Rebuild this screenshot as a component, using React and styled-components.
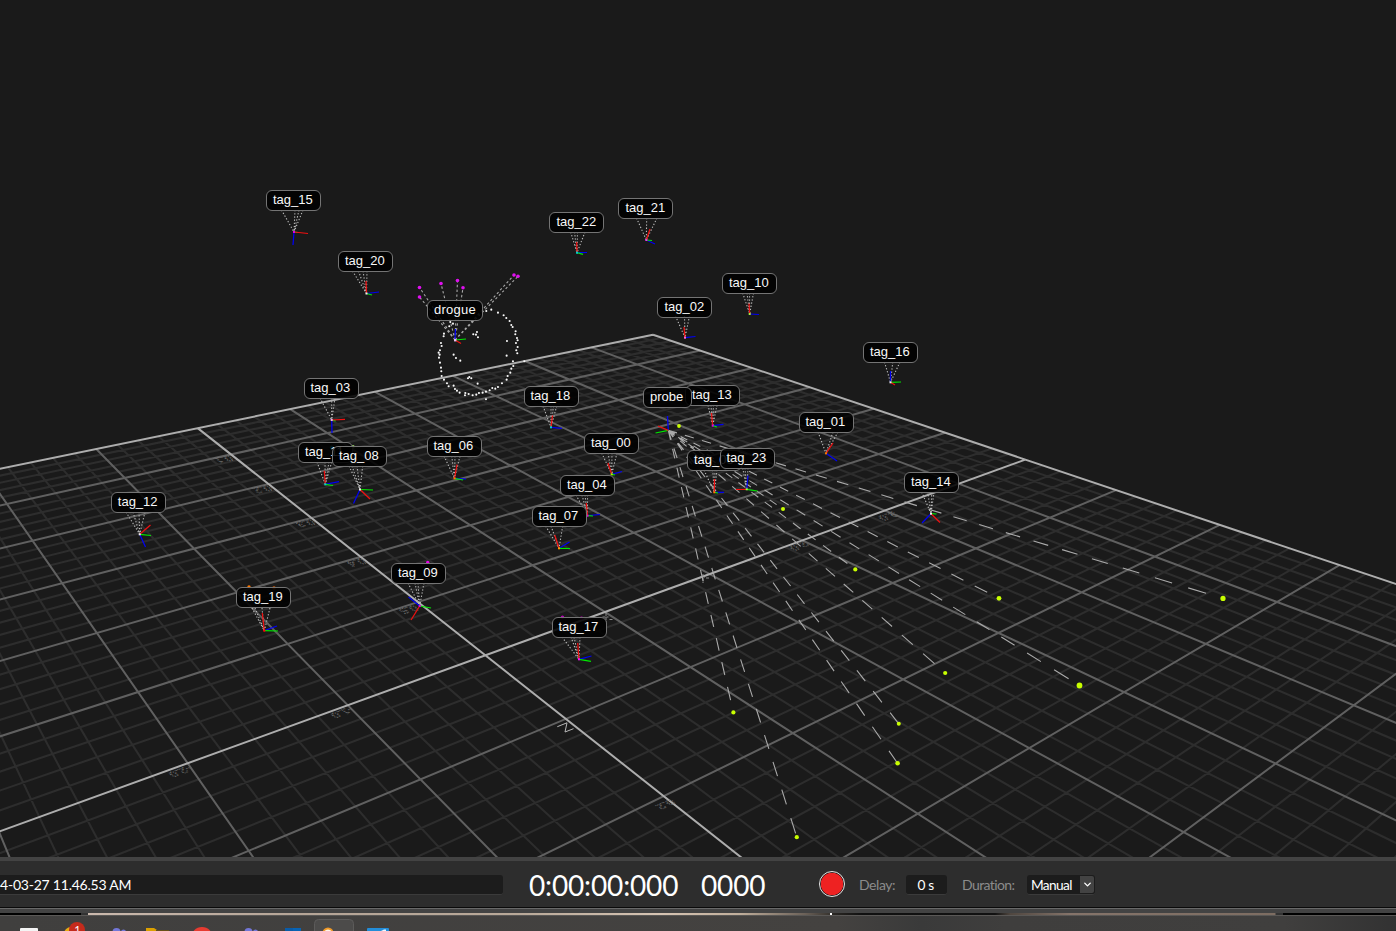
import React from "react";
import styled, { createGlobalStyle } from "styled-components";
import { ChevronDown } from "lucide-react";

const GlobalStyle = createGlobalStyle`
  * { box-sizing: border-box; }
  body { margin: 0; background: #1a1a1a; overflow: hidden; }
`;

const Screen = styled.div`
  display: flex;
  flex-direction: column;
  width: 1396px;
  height: 931px;
  overflow: hidden;
  font-family: Lato, "Liberation Sans", sans-serif;
`;

const Viewport = styled.main`
  position: relative;
  height: 857px;
  flex: none;
  overflow: hidden;
  background: #1a1a1a;
`;

const Scene = styled.svg`
  display: block;
  width: 1396px;
  height: 857px;
`;

const AxisText = styled.text`
  font: 12px "Liberation Sans", sans-serif;
  fill: none;
  stroke: ${(p) => p.$tone};
  stroke-width: 0.7px;
  stroke-dasharray: ${(p) => p.$dash};
`;

const Tag = styled.div`
  position: absolute;
  left: ${(p) => p.$x}px;
  top: ${(p) => p.$y}px;
  width: ${(p) => p.$w}px;
  height: 21px;
  padding-left: 6px;
  border: 1px solid #747474;
  border-radius: 6px;
  background: rgba(0, 0, 0, 0.88);
  color: #f8f8f8;
  font: 13px/18px "Liberation Sans", sans-serif;
  letter-spacing: ${(p) => p.$spacing || 0}px;
  white-space: nowrap;
`;

const ControlBar = styled.footer`
  display: flex;
  align-items: flex-start;
  height: 51px;
  flex: none;
  padding-top: 14px;
  border-top: 4px solid #434343;
  border-bottom: 1px solid #0a0a0a;
  background: #2d2d2d;
  color: #fff;
`;

const NameField = styled.div`
  width: 503px;
  height: 20px;
  border-bottom: 1px solid #3b3b3b;
  border-radius: 0 3px 3px 0;
  background: #1c1c1c;
  font-size: 14px;
  letter-spacing: -0.22px;
  line-height: 20px;
  white-space: nowrap;
`;

const Clock = styled.div`
  width: ${(p) => p.$w}px;
  margin-left: ${(p) => p.$gap}px;
  height: 20px;
  font-size: 28px;
  letter-spacing: -0.15px;
  line-height: 21px;
  white-space: nowrap;
`;

const RecordButton = styled.button`
  width: 26px;
  height: 26px;
  margin: -4px 0 0 52.5px;
  padding: 0;
  border: 1px solid #e6e6e6;
  border-radius: 50%;
  background: radial-gradient(circle, #ee2222 0 10.8px, #241c1c 11.6px);
`;

const FieldLabel = styled.span`
  width: ${(p) => p.$w}px;
  margin-left: ${(p) => p.$gap}px;
  color: #8b8b8b;
  font-size: 14px;
  letter-spacing: ${(p) => p.$spacing}px;
  line-height: 19px;
  white-space: nowrap;
`;

const ValueBox = styled.div`
  display: flex;
  width: ${(p) => p.$w}px;
  height: 20px;
  margin-left: ${(p) => p.$gap}px;
  padding-left: ${(p) => p.$pad}px;
  border-bottom: 1px solid #3b3b3b;
  border-radius: 3px;
  background: #1c1c1c;
  font-size: 13.7px;
  letter-spacing: -0.65px;
  word-spacing: 0.6px;
  line-height: 20px;
  white-space: nowrap;
`;

const DropButton = styled.span`
  display: flex;
  align-items: center;
  justify-content: center;
  width: 14px;
  height: 17px;
  margin: 1px 1px 0 auto;
  border-radius: 0 2px 2px 0;
  background: #434343;
`;

const WindowEdge = styled.div`
  height: 5px;
  flex: none;
  border-top: 1px solid #696969;
  background: #434343;
`;

const DesktopStrip = styled.div`
  height: 2px;
  flex: none;
  background: linear-gradient(
    90deg,
    #000 0 81px, #333 81px 88px, #cbb9ad 88px, #b5a597 300px, #b9a999 520px, #d6c4b3 660px,
    #c0ae9b 740px, #6b6158 805px, #38342f 830px, #fff 830px 832px, #2c2925 832px,
    #101010 862px, #111 995px, #4f463f 1010px, #85746a 1070px, #7d6d62 1275px, #333 1276px 1283px, #000 1283px
  );
`;

const Taskbar = styled.div`
  height: 16px;
  flex: none;
  border-top: 1px solid #5a5856;
  background: linear-gradient(90deg, #403f3e, #444240 60%, #3a3a3a 66%, #3f3e3d 72%, #403f3e 92%, #323232);
`;

const project = (u, v) => {
  const w = 1 - 0.036 * u - 0.0453 * v;
  return [(653 - 83 * u + 15.6 * v) / w, (334.7 + 0.16 * u) / w];
};

const segment = (u1, v1, u2, v2) => {
  const [a, b] = project(u1, v1);
  const [c, d] = project(u2, v2);
  return `M${a.toFixed(1)} ${b.toFixed(1)}L${c.toFixed(1)} ${d.toFixed(1)}`;
};

const GRID = 12;
const STEPS = Array.from({ length: GRID * 5 + 1 }, (_, i) => i);
const lines = (steps) =>
  steps.map((i) => segment(i / 5, 0, i / 5, GRID) + segment(0, i / 5, GRID, i / 5)).join("");
const minorPath = lines(STEPS.filter((i) => i % 5));
const majorPath = lines(STEPS.filter((i) => i % 5 === 0 && i !== 0 && i !== 30));
const axisPath = lines([0, 30]);

// [name, label x, label y, origin, red, green, blue, fan base y, fan xs, origin colour]
const TAGS = [
  ["tag_15", 266, 190, [294, 232], [308, 233.5], [298, 232.5], [293, 245], 210, [281.5, 295, 299, 303], "#d0d"],
  ["tag_20", 338, 251, [366.5, 293.5], [366, 281], [372, 295], [379, 292], 271, [352.5, 358.5, 363, 367], "#eee"],
  ["tag_22", 549.4, 212, [577, 252.7], [576.7, 242], [583, 254.3], [587, 252.5], 232, [570.7, 574.5, 577.5, 585], "#0cc"],
  ["tag_21", 618.4, 198, [646.3, 240], [650, 229], [652, 240.5], [655, 244], 218, [636.5, 646.7, 657], "#e3e"],
  ["tag_10", 722, 273, [749.7, 314], [749, 303.5], null, [759, 314.5], 293, [742.7, 747, 749.5, 753.5], "#ae4"],
  ["tag_02", 657.4, 297.4, [685, 337.7], [684, 327], null, [695.5, 336.5], 316, [675.5, 684.5, 689.5], "#f6c"],
  ["tag_16", 863, 342, [890.5, 382.3], [895, 385], [901, 382], [890.5, 371], 362, [884.5, 892.8, 900], "#eee"],
  ["tag_18", 523.5, 386, [551, 427.3], [552.5, 415.5], null, [562, 428.3], 406, [543, 551, 553.5, 556.7], "#0cc"],
  ["tag_13", 685, 385, [712.7, 425.7], [711.5, 413], [717, 427], [723.5, 424.3], 405, [708, 711, 713.5, 717], "#d0d"],
  ["tag_01", 798.5, 412, [826, 453.3], [833, 443], null, [837, 461], 432, [818, 833, 838], "#f70"],
  ["tag_03", 303.5, 378, [331.7, 420], [345, 419.3], [335.7, 421], [332, 433], 398, [320, 331.7, 335], "#eae"],
  ["tag_11", 298, 442, [325.3, 484.3], [324.3, 470.7], [333, 485.5], [339, 481.7], 462, [317, 325, 329, 331.7], "#0cc"],
  ["tag_08", 332, 446, [360, 489.5], [370, 499], [373, 490], [353.5, 503.5], 466, [349, 352, 357, 362.7], "#eee"],
  ["tag_06", 426.5, 436, [454.5, 478.3], [457, 464.5], [463, 480], [466, 479], 456, [444, 451.7, 455, 460], "#f70"],
  ["tag_00", 584, 433, [611.7, 474.3], [608, 463], [615, 475], [622, 471.5], 453, [601.7, 608, 612, 617], "#ae0"],
  ["tag_04", 560, 475, [587.5, 515.7], [586.3, 503], [593, 516], [600, 514.5], 495, [576, 582, 585, 587.5], "#d0d"],
  ["tag_07", 531.5, 506, [559, 548.3], [554.7, 535], [570, 548.5], [569.5, 542], 526, [545.7, 551, 562.7], "#f90"],
  ["tag_05", 687, 450.4, [714.3, 492.3], [714.5, 479], [718, 493], [724, 492.3], 470, [704, 712.7, 715, 717], "#f70"],
  ["tag_23", 719.5, 448, [746.7, 489.3], [736, 489.5], [757.5, 491], [748, 475.5], 468, [742.7, 745, 748], "#ae4"],
  ["tag_14", 904, 472, [931, 513.7], [940, 522.5], [936.5, 514], [922, 523], 492, [921.7, 927.7, 931.7, 934], "#eee"],
  ["tag_12", 110.8, 492, [139.7, 534.3], [150.5, 525], [151, 535.5], [145.5, 547], 512, [126, 133, 139, 145], "#eee"],
  ["tag_09", 391, 563, [419.7, 606], [411, 620], [431, 608], [408.5, 597], 583, [408, 415, 418, 424], "#d0d"],
  ["tag_19", 236, 587, [264.3, 630.7], [262.3, 613], [278, 631], [277, 626], 608, [252, 255, 262, 270], "#f00"],
  ["tag_17", 551.5, 617, [579, 659.3], [577.7, 643], [591, 661.3], [591.5, 656], 637, [562, 571, 574, 580], "#f0f"],
];

const DROGUE = [455, 340];
const DROGUE_MARKERS = [
  [419.5, 287.5], [419.5, 297], [441, 283.5], [457.5, 280.5], [463, 287.7], [514, 275], [518, 276.3],
];

// Point cloud in thirds of a pixel, relative to (230, 170)
const CLOUD = [
  [768, 422], [783, 418], [803, 427], [820, 435], [828, 443], [838, 452], [843, 464], [847, 470], [856, 483],
  [855, 492], [860, 503], [862, 510], [857, 518], [862, 530], [858, 540], [861, 549], [848, 573], [849, 587],
  [843, 595], [840, 607], [832, 617], [829, 628], [815, 639], [803, 650], [795, 655], [778, 660], [786, 653],
  [767, 664], [767, 687], [757, 667], [746, 668], [738, 673], [727, 675], [715, 671], [705, 668], [704, 675],
  [688, 667], [680, 661], [674, 656], [670, 646], [655, 648], [650, 639], [641, 628], [634, 617], [633, 603],
  [632, 592], [629, 577], [626, 562], [625, 547], [629, 540], [634, 527], [632, 518], [640, 498], [641, 490],
  [660, 455], [668, 460], [657, 468], [670, 553], [677, 563], [690, 571], [740, 485], [737, 493], [743, 501],
  [729, 492], [830, 512], [829, 556], [717, 620], [723, 624], [713, 624], [742, 640], [628, 553], [882, 573],
];

// [x, y, radius, foreshortening, number of dash periods]
const PROBE = [668.3, 430.3];
const PROBE_TARGETS = [
  [679, 426, 1.9, 1, 0], [783, 509, 2, 0.85, 10], [855.3, 569.4, 2.1, 0.8, 14], [999, 598.3, 2.4, 0.7, 19],
  [1223, 598.4, 2.6, 0.68, 23], [1079.5, 685.5, 2.9, 0.65, 21.9], [945.2, 673, 2.1, 0.72, 17],
  [898.8, 723.8, 2, 0.75, 17.5], [897.6, 763.3, 2.3, 0.716, 18.5], [733.4, 712.4, 2.1, 0.84, 13],
  [796.8, 837.2, 2.1, 0.778, 17.65],
];

const probeDashes = PROBE_TARGETS.map(([x, y, , k, n]) => {
  let path = "";
  const at = (i) => {
    const t = Math.min(i / n, 1);
    const s = (t * k) / (1 - t * (1 - k));
    return `${(PROBE[0] + (x - PROBE[0]) * s).toFixed(1)} ${(PROBE[1] + (y - PROBE[1]) * s).toFixed(1)}`;
  };
  for (let i = 0; i < n; i += 1) path += `M${at(i)}L${at(i + 0.52)}`;
  return path;
}).join("");

const AXIS_MARKS = [
  ["-1.0", 349, 707, 160], ["-2.0", 187, 766, 160], ["0.2", 670, 799, 155],
  ["0.1", 229, 455, 168], ["0.2", 268, 485, 168], ["0.3", 311, 519, 168], ["0.4", 362, 558, 166], ["0.5", 414, 605, 165],
  ["3.0", 893, 511, 160], ["2.0", 804, 541, 160],
];

const MARKERS = [
  [353, 446.7, "#9d6"], [331.5, 447.5, "#0cc"], [427.7, 562.5, "#e0e"], [249, 587, "#f70"],
  [274, 588, "#e60"], [562.5, 617.3, "#b0b"], [581.5, 618, "#808"],
];

function Axis({ from, to, color }) {
  return to ? <line x1={from[0]} y1={from[1]} x2={to[0]} y2={to[1]} stroke={color} strokeWidth="1.25" /> : null;
}

function Triad({ origin, red, green, blue }) {
  return (
    <>
      <Axis from={origin} to={blue} color="#0000f4" />
      <Axis from={origin} to={green} color="#00e800" />
      <Axis from={origin} to={red} color="#f01010" />
    </>
  );
}

function World() {
  return (
    <Scene viewBox="0 0 1396 857" aria-hidden="true">
      <g fill="none">
        <path d={minorPath} stroke="#2d2d2d" strokeWidth="2.1" />
        <path d={majorPath} stroke="#606060" strokeWidth="2" />
        <path d={axisPath} stroke="#adadad" strokeWidth="2" />
      </g>
      {AXIS_MARKS.map(([label, x, y, angle]) => (
        <AxisText key={`${x}-${y}`} $tone="#757575" $dash="1.3 1.2" transform={`translate(${x} ${y}) rotate(${angle}) skewX(35) scale(1 .75)`}>
          {label}
        </AxisText>
      ))}
      <path d="M557.3 726.7L567 722.8L565 732L573.5 728.7" stroke="#b8b8b8" fill="none" strokeWidth="1" />
      <path d="M602.500 617h6M606 613v9M609.500 619.500h3M700 577h5M703 574v9M706 578h3" stroke="#999" fill="none" strokeWidth=".9" strokeDasharray="3 1" />
      <path d={probeDashes} stroke="#aaa" strokeWidth="1.1" fill="none" />
      <g stroke="#bcbcbc" strokeWidth="1.1" strokeDasharray="1.3 1.9" fill="none">
        {TAGS.map(([name, , , o, , , , y, xs]) => (
          <path key={name} d={xs.map((x) => `M${x} ${y}L${o[0]} ${o[1]}`).join("")} />
        ))}
      </g>
      <path
        d={DROGUE_MARKERS.map(([x, y]) => `M${DROGUE[0]} ${DROGUE[1]}L${x} ${y}`).join("")}
        stroke="#a8a8a8" strokeWidth="1.1" strokeDasharray="2.4 2.4" fill="none"
      />
      {CLOUD.map(([x, y], i) => <circle key={i} cx={230.3 + x / 3} cy={170.3 + y / 3} r="1.05" fill="#fafafa" />)}
      {DROGUE_MARKERS.map(([x, y]) => <circle key={x + y} cx={x} cy={y} r="1.8" fill="#e010f0" />)}
      {TAGS.map(([name, , , o, r, g, b, , , c]) => (
        <g key={name}>
          <Triad origin={o} red={r} green={g} blue={b} />
          <rect x={o[0] - 1} y={o[1] - 1} width="2" height="2" fill={c} />
        </g>
      ))}
      <Triad origin={DROGUE} red={[461, 343.5]} green={[466, 339]} blue={[455.5, 329]} />
      <rect x="454" y="339" width="2.4" height="2.4" fill="#f0c0f0" />
      <Triad origin={PROBE} red={[658, 426]} green={[655.5, 433]} blue={[667.5, 416]} />
      {PROBE_TARGETS.map(([x, y, r]) => <circle key={x} cx={x} cy={y} r={r} fill="#c8ff00" />)}
      {MARKERS.map(([x, y, c]) => <circle key={x} cx={x} cy={y} r="1.7" fill={c} />)}
    </Scene>
  );
}

function TaskIcons() {
  return (
    <svg width="420" height="15" viewBox="0 916 420 15" display="block" aria-hidden="true">
      <rect x="20" y="928" width="18" height="6" rx="1" fill="#f4f4f4" />
      <circle cx="71" cy="934" r="7" fill="#e8aa13" />
      <circle cx="77" cy="930" r="8" fill="#c42b1c" />
      <text x="77.5" y="934" fill="#fff" fontFamily="Lato, sans-serif" fontSize="11" textAnchor="middle">1</text>
      <g fill="#7377d8">
        <circle cx="116.5" cy="932" r="4" /><circle cx="123.5" cy="932" r="2.5" />
        <circle cx="248.5" cy="932" r="4" /><circle cx="255.5" cy="932" r="2.5" />
      </g>
      <path d="M146 931v-3h8l3 2v1z" fill="#dca000" />
      <path d="M156 930h13v1h-13z" fill="#675118" />
      <circle cx="202" cy="938" r="11" fill="#e73b31" />
      <rect x="285" y="928" width="8" height="4" fill="#0a5ca8" />
      <rect x="293" y="928" width="8" height="4" fill="#0863b4" />
      <rect x="314.5" y="919.5" width="39" height="20" rx="4" fill="#4c4b4a" stroke="#5c5b5a" />
      <circle cx="328" cy="933" r="5.5" fill="#f09a27" />
      <circle cx="328" cy="933.5" r="4" fill="#fff5e7" />
      <rect x="367" y="928" width="22" height="8" rx="1" fill="#238dd8" />
      <path d="M381 931l3-1.500h2v1.500z" fill="#eef7ff" />
    </svg>
  );
}

export default function App() {
  return (
    <Screen>
      <GlobalStyle />
      <Viewport>
        <World />
        {TAGS.map(([name, x, y]) => (
          <Tag key={name} $x={x} $y={y} $w={55}>{name}</Tag>
        ))}
        <Tag $x={427} $y={299.5} $w={56} $spacing={0.25}>drogue</Tag>
        <Tag $x={643} $y={387} $w={49}>probe</Tag>
      </Viewport>
      <ControlBar>
        <NameField>4-03-27 11.46.53 AM</NameField>
        <Clock $w={150} $gap={26}>0:00:00:000</Clock>
        <Clock $w={65} $gap={22}>0000</Clock>
        <RecordButton aria-label="Record" />
        <FieldLabel $w={38} $gap={14.5} $spacing={-0.45}>Delay:</FieldLabel>
        <ValueBox $w={41} $gap={8.5} $pad={12}>0 s</ValueBox>
        <FieldLabel $w={54} $gap={15.5} $spacing={-0.6}>Duration:</FieldLabel>
        <ValueBox $w={68} $gap={11} $pad={4}>
          Manual
          <DropButton><ChevronDown size={11} strokeWidth={3} /></DropButton>
        </ValueBox>
      </ControlBar>
      <WindowEdge />
      <DesktopStrip />
      <Taskbar><TaskIcons /></Taskbar>
    </Screen>
  );
}
